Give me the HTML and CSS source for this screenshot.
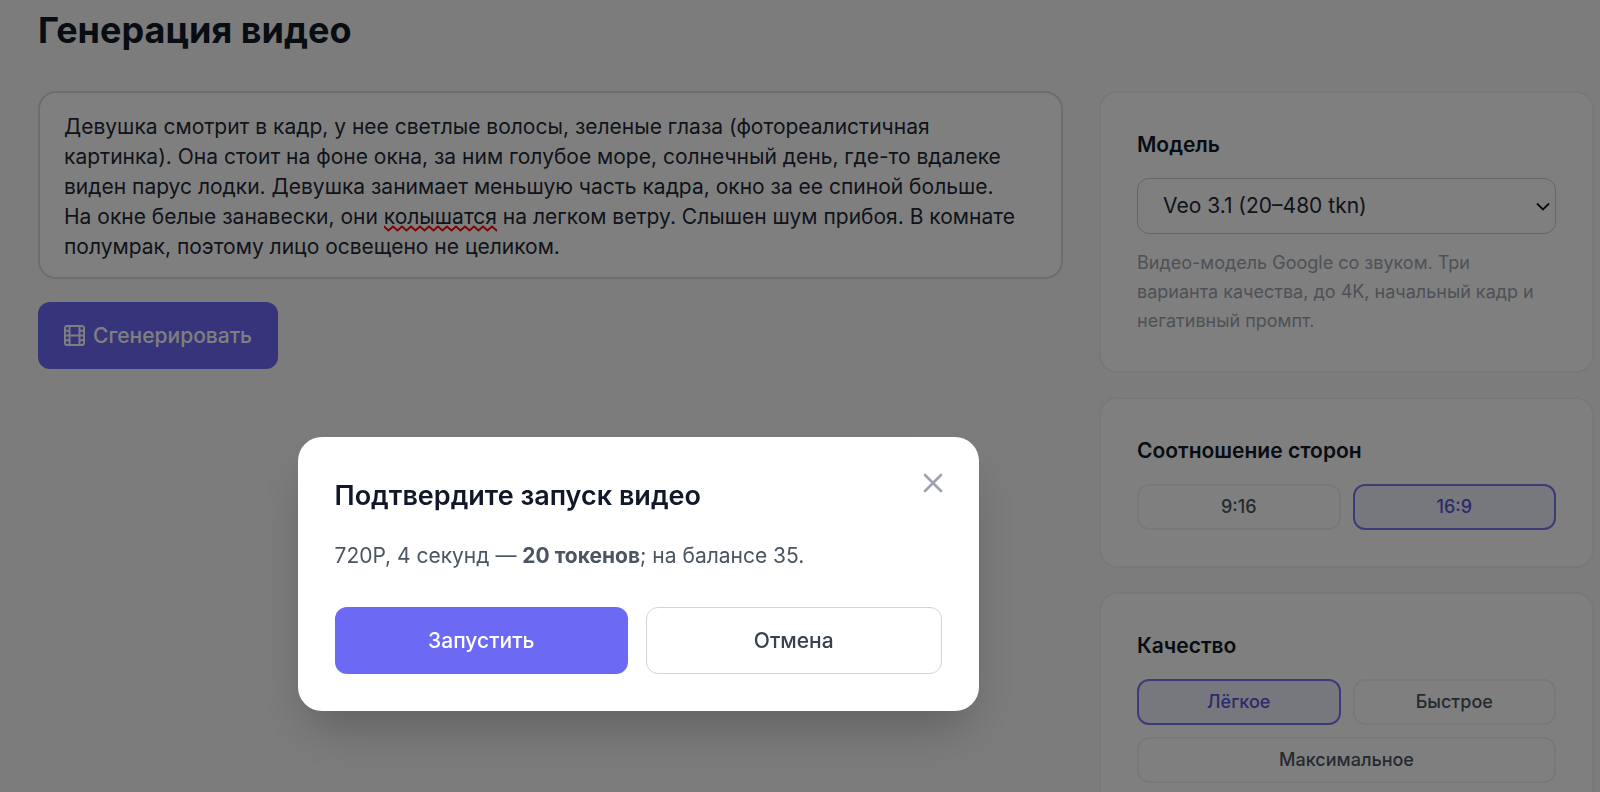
FILE: index.html
```html
<!DOCTYPE html>
<html lang="ru">
  <head>
    <meta charset="UTF-8" />
    <meta name="viewport" content="width=device-width, initial-scale=1.0" />
    <title>Генерация видео</title>
    <link rel="stylesheet" href="styles.css">
  </head>
  <body>
    <main class="page">
      <h1 class="page-title">Генерация видео</h1>
      <div class="layout">
        <section class="workspace">
          <div class="prompt">
            <textarea class="prompt-input" rows="5" aria-label="Описание видео" spellcheck="false">Девушка смотрит в кадр, у нее светлые волосы, зеленые глаза (фотореалистичная картинка). Она стоит на фоне окна, за ним голубое море, солнечный день, где-то вдалеке виден парус лодки. Девушка занимает меньшую часть кадра, окно за ее спиной больше. На окне белые занавески, они колышатся на легком ветру. Слышен шум прибоя. В комнате полумрак, поэтому лицо освещено не целиком.</textarea>
            <svg class="prompt-typo" width="113" height="7" aria-hidden="true">
              <defs>
                <pattern id="wave" width="9" height="7" patternUnits="userSpaceOnUse">
                  <path d="M-1 .4L0 1.5L4.5 5.5L9 1.5L10 .4" fill="none" stroke="#f00" stroke-width="1.8" />
                </pattern>
              </defs>
              <rect width="113" height="7" fill="url(#wave)" />
            </svg>
          </div>
          <button class="btn btn-primary" type="button">
            <svg width="21" height="21" viewBox="0 0 22 22" fill="none" stroke="currentColor" stroke-width="2" aria-hidden="true">
              <rect x="1" y="1" width="20" height="20" rx="2.5" />
              <path d="M5.8 1v20M16.2 1v20M5.8 11h10.4M1 6h4.8M1 11h4.8M1 16h4.8M16.2 6H21M16.2 11H21M16.2 16H21" />
            </svg>
            Сгенерировать
          </button>
        </section>

        <aside class="sidebar">
          <section class="card">
            <h2 class="card-title"><label for="model">Модель</label></h2>
            <div class="select">
              <select id="model" class="select-input">
                <option>Veo 3.1 (20–480 tkn)</option>
              </select>
              <svg class="select-arrow" width="14" height="10" viewBox="0 0 14 10" fill="none" stroke="currentColor" stroke-width="1.8" aria-hidden="true">
                <path d="M1 1.5l6 6 6-6" />
              </svg>
            </div>
            <p class="hint">Видео-модель Google со звуком. Три варианта качества, до 4K, начальный кадр и негативный промпт.</p>
          </section>

          <section class="card">
            <h2 class="card-title">Соотношение сторон</h2>
            <div class="options">
              <button class="option" type="button">9:16</button>
              <button class="option active" type="button">16:9</button>
            </div>
          </section>

          <section class="card">
            <h2 class="card-title">Качество</h2>
            <div class="options">
              <button class="option active" type="button">Лёгкое</button>
              <button class="option" type="button">Быстрое</button>
              <button class="option wide" type="button">Максимальное</button>
            </div>
          </section>
        </aside>
      </div>
    </main>

    <div class="overlay">
      <div class="modal" role="dialog" aria-modal="true" aria-labelledby="modal-title">
        <button class="modal-close" type="button" aria-label="Закрыть">
          <svg width="20" height="20" viewBox="0 0 20 20" fill="none" stroke="currentColor" stroke-width="2.6" stroke-linecap="round" aria-hidden="true">
            <path d="M2 2l16 16M18 2L2 18" />
          </svg>
        </button>
        <h2 class="modal-title" id="modal-title">Подтвердите запуск видео</h2>
        <p class="modal-text">720P, 4 секунд — <strong>20 токенов</strong>; на балансе 35.</p>
        <div class="modal-actions">
          <button class="btn btn-primary" type="button">Запустить</button>
          <button class="btn btn-outline" type="button">Отмена</button>
        </div>
      </div>
    </div>
  </body>
</html>
```
FILE: styles.css
```css
* {
  box-sizing: border-box;
}
body {
  margin: 0;
  height: 100vh;
  overflow: hidden;
  background: #f9f9fa;
  color: #111827;
  font-family: Inter, "Liberation Sans", sans-serif;
  font-size: 21px;
  line-height: 30px;
}
h1,
h2,
p {
  margin: 0;
}
button,
select,
textarea {
  font: inherit;
}
button {
  cursor: pointer;
}
.page {
  padding: 8px 6px 0 38px;
}
.page-title {
  font-size: 36px;
  line-height: 44px;
  font-weight: 700;
  margin-bottom: 39px;
}
.layout {
  display: grid;
  grid-template-columns: minmax(0, 1fr) 495px;
  gap: 36px;
  align-items: start;
}

/* prompt */
.prompt {
  position: relative;
  margin-bottom: 23px;
}
.prompt-input {
  display: block;
  width: 100%;
  padding: 19px 40px 15px 24px;
  border: 2px solid #d9dbdf;
  border-radius: 18px;
  background: #fff;
  color: #1f2937;
  resize: none;
  overflow: hidden;
  outline: none;
}
.prompt-typo {
  position: absolute;
  left: 346px;
  top: 134px;
}

/* buttons */
.btn {
  display: flex;
  align-items: center;
  justify-content: center;
  gap: 8px;
  height: 67px;
  padding: 0 26px;
  border: none;
  border-radius: 12px;
  font-weight: 500;
}
.btn-primary {
  background: #6c69f5;
  color: #fff;
}
.btn-outline {
  background: #fff;
  border: 1px solid #d1d5db;
  color: #374151;
}

/* sidebar */
.sidebar {
  display: flex;
  flex-direction: column;
  gap: 24px;
}
.card {
  padding: 36px;
  border: 2px solid #f0f1f3;
  border-radius: 18px;
  background: #fff;
}
.card-title {
  font-size: 21px;
  line-height: 32px;
  font-weight: 600;
  margin-bottom: 17px;
}
.select {
  position: relative;
}
.select-input {
  display: block;
  width: 100%;
  height: 56px;
  padding: 0 25px;
  border: 1px solid #c9ccd2;
  border-radius: 12px;
  background: #fff;
  color: #1f2937;
  appearance: none;
}
.select-arrow {
  position: absolute;
  right: 6px;
  top: 24px;
  pointer-events: none;
}
.hint {
  margin-top: 14px;
  font-size: 18px;
  line-height: 29px;
  color: #9ca3af;
}
.options {
  display: grid;
  grid-template-columns: 1fr 1fr;
  gap: 12px;
}
.option {
  height: 46px;
  padding: 0 12px;
  border: 2px solid #f0f1f3;
  border-radius: 12px;
  background: #fff;
  color: #4b5563;
  font-size: 18px;
  font-weight: 500;
}
.option.active {
  border-color: #7a77ea;
  background: #eeeefc;
  color: #5b55d6;
}
.option.wide {
  grid-column: 1 / -1;
}

/* modal, centered over the workspace */
.overlay {
  position: fixed;
  inset: 0;
  display: flex;
  align-items: center;
  justify-content: center;
  padding: 356px 324px 0 0;
  background: rgba(0, 0, 0, 0.5);
}
.modal {
  position: relative;
  width: 100%;
  max-width: 681px;
  padding: 37px;
  border-radius: 24px;
  background: #fff;
  box-shadow: 0 25px 50px -12px rgba(0, 0, 0, 0.25);
}
.modal-close {
  position: absolute;
  top: 36px;
  right: 36px;
  display: flex;
  padding: 0;
  border: none;
  background: none;
  color: #9ca3af;
}
.modal-title {
  font-size: 27px;
  line-height: 44px;
  font-weight: 600;
  margin-bottom: 22px;
}
.modal-text {
  line-height: 32px;
  margin-bottom: 35px;
  color: #4b5563;
}
.modal-actions {
  display: flex;
  gap: 18px;
}
.modal-actions .btn {
  flex: 1;
}
```
